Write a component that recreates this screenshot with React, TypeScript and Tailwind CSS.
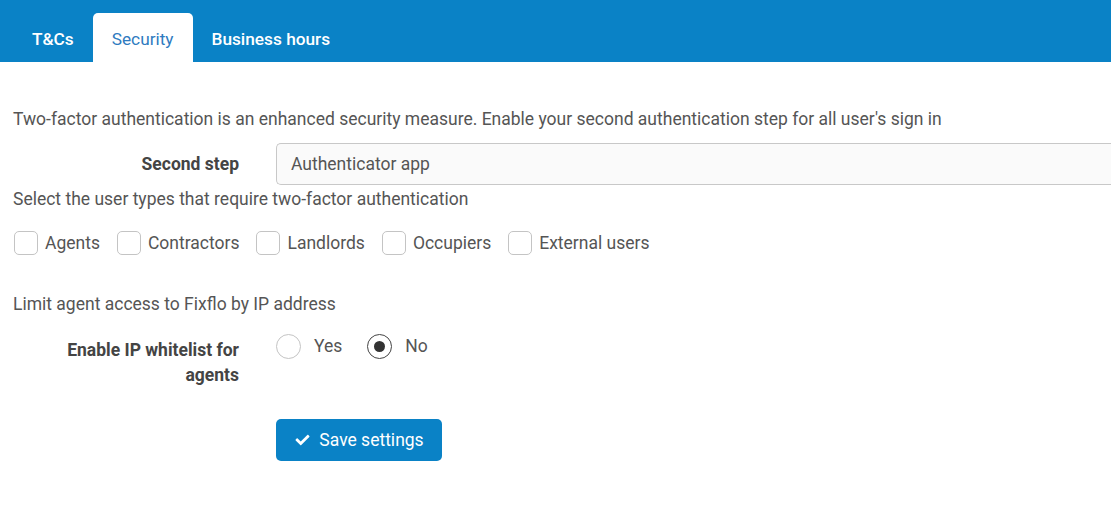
import { FaCheck } from 'react-icons/fa';

const userTypes = ['Agents', 'Contractors', 'Landlords', 'Occupiers', 'External users'];

const App = () => {
    return (
        <div className="w-[1111px] h-[508px] overflow-hidden bg-white text-[#555] text-[17.5px] font-['Roboto',sans-serif]">
            {/* Tabs header */}
            <div className="h-[62px] bg-[#0a82c6] flex items-end pl-[13px] text-[17.25px]">
                <div className="h-[49px] px-[19px] flex items-center pt-[5px] text-white font-medium">T&amp;Cs</div>
                <div className="h-[49px] px-[19px] flex items-center pt-[5px] bg-white rounded-t-[5px] text-[#2f7bbf]">Security</div>
                <div className="h-[49px] px-[19px] flex items-center pt-[5px] text-white font-medium">Business hours</div>
            </div>

            <div className="pl-[13px]">
                <p className="mt-[46px] leading-[22px]">
                    Two-factor authentication is an enhanced security measure. Enable your second authentication step for all user's sign in
                </p>

                <div className="flex items-center mt-[13px] -ml-[13px]">
                    <label className="w-[239px] text-right font-bold text-[#444]">Second step</label>
                    <div className="ml-[37px] flex-1 h-[42px] flex items-center pl-[14px] border border-[#c8c8c8] border-r-0 rounded-l-[5px] bg-[#fafafa]">
                        Authenticator app
                    </div>
                </div>

                <p className="mt-[3px] leading-[22px]">Select the user types that require two-factor authentication</p>

                <div className="flex items-center mt-[20px] pl-px gap-[17px]">
                    {userTypes.map((t) => (
                        <label key={t} className="flex items-center gap-[7px]">
                            <span className="w-[24px] h-[24px] border border-[#c4c4c4] rounded-[5px] bg-white" />
                            <span>{t}</span>
                        </label>
                    ))}
                </div>

                <p className="mt-[37px] leading-[22px]">Limit agent access to Fixflo by IP address</p>

                <div className="flex items-start mt-[18px] -ml-[13px]">
                    <label className="w-[239px] text-right font-bold text-[#444] leading-[25px] pt-[5px]">
                        Enable IP whitelist for<br />agents
                    </label>
                    <div className="ml-[37px] flex items-center">
                        <span className="w-[25px] h-[25px] rounded-full border border-[#c4c4c4] bg-white" />
                        <span className="ml-[13px]">Yes</span>
                        <span className="ml-[25px] w-[25px] h-[25px] rounded-full border border-[#444] bg-white flex items-center justify-center">
                            <span className="w-[11px] h-[11px] rounded-full bg-[#333]" />
                        </span>
                        <span className="ml-[13px]">No</span>
                    </div>
                </div>

                <div className="mt-[31px] pl-[263px]">
                    <button className="h-[42px] w-[166px] bg-[#0a82c6] rounded-[5px] text-white flex items-center justify-center gap-[8px]">
                        <FaCheck className="w-[17px] h-[14px]" />
                        <span>Save settings</span>
                    </button>
                </div>
            </div>
        </div>
    );
};

export default App;
